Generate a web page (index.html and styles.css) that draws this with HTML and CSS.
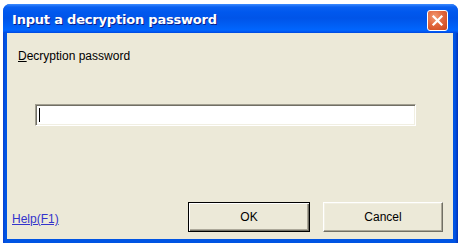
FILE: index.html
```html
<!DOCTYPE html>
<html>
<head>
<meta charset="utf-8">
<link rel="stylesheet" href="styles.css">
</head>
<body>
<div class="window">
  <div class="titlebar">
    <span class="title">Input a decryption password</span>
    <span class="close">
      <svg width="13" height="13" viewBox="0 0 13 13"><path d="M2.5 2.5 L10.5 10.5 M10.5 2.5 L2.5 10.5" stroke="#fff" stroke-width="2.2" stroke-linecap="square"/></svg>
    </span>
  </div>
  <div class="client">
    <div class="label"><u>D</u>ecryption password</div>
    <div class="edit"><span class="caret"></span></div>
    <div class="footer">
      <a class="help">Help(F1)</a>
      <div class="buttons">
        <div class="btn btn-default">OK</div>
        <div class="btn">Cancel</div>
      </div>
    </div>
  </div>
</div>
</body>
</html>
```

FILE: styles.css
```css
html, body {
  margin: 0;
  padding: 0;
  background: #ffffff;
}
body {
  padding: 4px 2px 2px 3px;
  font-family: "Liberation Sans", Arial, sans-serif;
  font-size: 12px;
  color: #000;
}
.window {
  width: 455px;
  height: 239px;
  display: flex;
  flex-direction: column;
  background: linear-gradient(to right, #0A3FD0 0, #0054E3 2px, #0054E3 calc(100% - 3px), #0031B8 100%);
  border-radius: 7px 7px 0 0;
  box-sizing: border-box;
  padding: 0 5px 4px 4px;
}
.titlebar {
  height: 29px;
  margin: 0 -5px 0 -4px;
  border-radius: 7px 7px 0 0;
  background: linear-gradient(to bottom, #3D8BFF 0, #0A60F0 3px, #0058EE 8px, #0054E8 14px, #0060F6 22px, #0066FF 26px, #0055F0 28px, #0046DA 29px);
  display: flex;
  align-items: center;
  justify-content: space-between;
  padding: 0 10px 0 9px;
  flex-shrink: 0;
}
.title {
  color: #fff;
  font-weight: bold;
  font-size: 13px;
  font-family: "DejaVu Sans", "Liberation Sans", sans-serif;
  letter-spacing: -0.2px;
  text-shadow: 1px 1px 0 #0A1E8C;
  margin-top: 1px;
}
.close {
  width: 19px;
  height: 19px;
  border: 1px solid #fff;
  border-radius: 3px;
  background: radial-gradient(circle at 35% 30%, #F29A72 0, #E2683E 45%, #C9451B 100%);
  display: flex;
  align-items: center;
  justify-content: center;
  margin-top: 3px;
}
.client {
  flex: 1;
  background: #ECE9D8;
  display: flex;
  flex-direction: column;
  padding: 16px 10px 7px 5px;
}
.label {
  margin-left: 6px;
  line-height: 14px;
}
.edit {
  margin: 41px 0 0 23px;
  width: 381px;
  height: 22px;
  box-sizing: border-box;
  background: #fff;
  border-top: 1px solid #A19E90;
  border-left: 1px solid #A19E90;
  border-bottom: 1px solid #FFFFFF;
  border-right: 1px solid #FFFFFF;
  box-shadow: inset 1px 1px 0 #716F64, inset -1px -1px 0 #F1EFE2;
  display: flex;
  align-items: center;
  padding-left: 3px;
}
.caret {
  width: 1px;
  height: 14px;
  background: #000;
}
.footer {
  margin-top: auto;
  display: flex;
  align-items: flex-end;
  justify-content: space-between;
}
.help {
  color: #3333CC;
  text-decoration: underline;
  line-height: 14px;
  margin-bottom: 6px;
}
.buttons {
  display: flex;
  gap: 13px;
}
.btn {
  width: 120px;
  height: 30px;
  box-sizing: border-box;
  display: flex;
  align-items: center;
  justify-content: center;
  background: #ECE9D8;
  border-top: 1px solid #FFFFFF;
  border-left: 1px solid #FFFFFF;
  border-right: 1px solid #716F64;
  border-bottom: 1px solid #716F64;
  box-shadow: inset -1px -1px 0 #ACA899, inset 1px 1px 0 #F1EFE2;
}
.btn-default {
  width: 122px;
  border: 1px solid #000;
  box-shadow: inset 1px 1px 0 #fff, inset -1px -1px 0 #716F64, inset -2px -2px 0 #ACA899;
}
```
